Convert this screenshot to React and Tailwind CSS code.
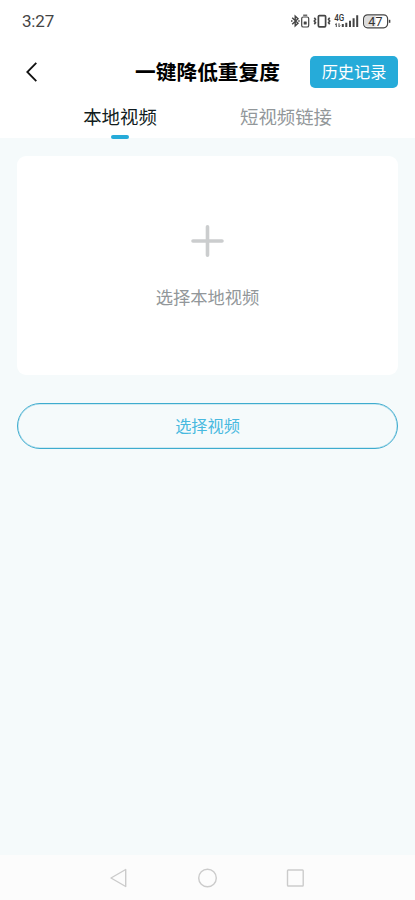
import React, { useState } from 'react';

const tabs = [
  { id: 'local', label: '本地视频' },
  { id: 'link', label: '短视频链接' },
];

const StatusIcons = () => (
  <svg width="102" height="18" viewBox="0 0 102 18" fill="none" stroke="#444" className="font-['Roboto',sans-serif]">
    {/* Bluetooth */}
    <path d="M2.2 5.8l5.8 5.4-2.8 2.6V4.2l2.8 2.6-5.8 5.4" strokeWidth="1.4" />
    <path d="M1 9h1.5M8.2 9h1.5" strokeWidth="1.6" />
    {/* Device battery */}
    <rect x="11.7" y="5" width="7" height="10" rx="1.6" strokeWidth="1.2" />
    <path d="M13.2 3.2h4" strokeWidth="1.2" />
    <rect x="13.7" y="9.5" width="3" height="3" rx="0.6" fill="#444" stroke="none" />
    {/* Vibrate */}
    <rect x="28.4" y="3.6" width="7.2" height="11.2" rx="1" strokeWidth="1.7" />
    <path
      d="M24.3 5.7l1.2 1.6-1.2 1.7 1.2 1.7-1.2 1.6M39.7 5.7l-1.2 1.6 1.2 1.7-1.2 1.7 1.2 1.6"
      strokeWidth="1.6"
    />
    {/* Signal */}
    <text x="44.3" y="9.2" fontSize="9" fontWeight="500" textLength="10" lengthAdjust="spacingAndGlyphs" fill="#333" stroke="none">
      4G
    </text>
    <path d="M46.3 15v-3.5l-1.2 1.2M49 11.3v3.5l1.2-1.2" strokeWidth="1" />
    <path d="M52.8 15v-3M56.3 15v-4.3M60 15V8.7M63.6 15V6.2M67.2 15V3.2" strokeWidth="2" />
    {/* Battery level */}
    <rect x="73.6" y="2.8" width="24" height="13" rx="4" fill="#fff" strokeWidth="1.2" />
    <path d="M77.5 4h8v10.6h-8a2.8 2.8 0 0 1-2.8-2.8V6.800a2.800 2.800 0 0 1 2.800-2.800z" fill="#dcdcdc" stroke="none" />
    <path d="M99.6 7.8v3" strokeWidth="1.5" />
    <text x="85.4" y="13.6" fontSize="12.5" textAnchor="middle" fill="#333" stroke="none">
      47
    </text>
  </svg>
);

const App = () => {
  const [activeTab, setActiveTab] = useState('local');

  return (
    <div className="flex h-[900px] w-full flex-col bg-[#f5fafb] font-['Noto_Sans_CJK_SC',sans-serif]">
      <header className="h-[138px] bg-white">
        {/* Status bar */}
        <div className="flex h-[42px] items-center justify-between pr-[23px] pl-[22px]">
          <span className="pt-px font-['Roboto',sans-serif] text-[17px] leading-none tracking-[-0.2px] text-[#444]">
            3:27
          </span>
          <StatusIcons />
        </div>

        {/* Title bar */}
        <div className="grid h-[60px] grid-cols-[1fr_auto_1fr] items-center pr-[17px] pl-[25px]">
          <button type="button" aria-label="返回" className="justify-self-start">
            <svg width="14" height="20" viewBox="0 0 14 20" fill="none" stroke="#111" strokeWidth="1.8">
              <path d="M11.3 0.8L2.3 10l9 9.2" />
            </svg>
          </button>
          <h1 className="mr-2 pb-px text-[20.7px] leading-none font-bold text-black">一键降低重复度</h1>
          <button
            type="button"
            className="h-8 w-[88px] justify-self-end rounded-[5px] bg-[#26abd9] pb-px text-[16.2px] leading-none text-white"
          >
            历史记录
          </button>
        </div>

        {/* Tabs */}
        <nav className="grid h-[36.5px] grid-cols-2 pr-[46px] pl-[37px]">
          {tabs.map((tab) => (
            <button
              key={tab.id}
              type="button"
              onClick={() => setActiveTab(tab.id)}
              className={`flex flex-col items-center justify-between text-[18.4px] ${
                activeTab === tab.id ? 'text-[#111c20]' : 'text-[#92979a]'
              }`}
            >
              <span className="leading-7">{tab.label}</span>
              {activeTab === tab.id && <span className="h-[3.5px] w-[18px] shrink-0 rounded-full bg-[#26abd9]" />}
            </button>
          ))}
        </nav>
      </header>

      <main className="flex-1 px-[17px] pt-[18px]">
        <button
          type="button"
          className="flex h-[219px] w-full flex-col items-center rounded-[9px] bg-white pt-[69px]"
        >
          <svg width="33" height="32" viewBox="0 0 33 32" stroke="#cbcdce" strokeWidth="3.6" strokeLinecap="round">
            <path d="M16.5 1.8v28.4M2 16h29" />
          </svg>
          <span className="mt-[28px] text-[17.3px] leading-6 text-[#92979a]">选择本地视频</span>
        </button>

        <button
          type="button"
          className="mt-7 h-[46px] w-full rounded-full border border-[#3eaccf] pb-0.5 text-[16.2px] leading-none text-[#48b9df] shadow-[inset_0_0_0_0.5px_#3eaccf66]"
        >
          选择视频
        </button>
      </main>

      {/* System navigation */}
      <footer className="flex h-[45px] items-center justify-center bg-[#fcfcfc] pr-0.5">
        <svg width="196" height="20" viewBox="0 0 196 20" fill="none" stroke="#cbcbcb" strokeWidth="1.4" strokeLinejoin="round">
          <path d="M16.7 1.5v17L2 10z" />
          <circle cx="98.5" cy="10" r="8.8" />
          <rect x="178.5" y="2" width="15.7" height="16" rx="0.8" />
        </svg>
      </footer>
    </div>
  );
};

export default App;
